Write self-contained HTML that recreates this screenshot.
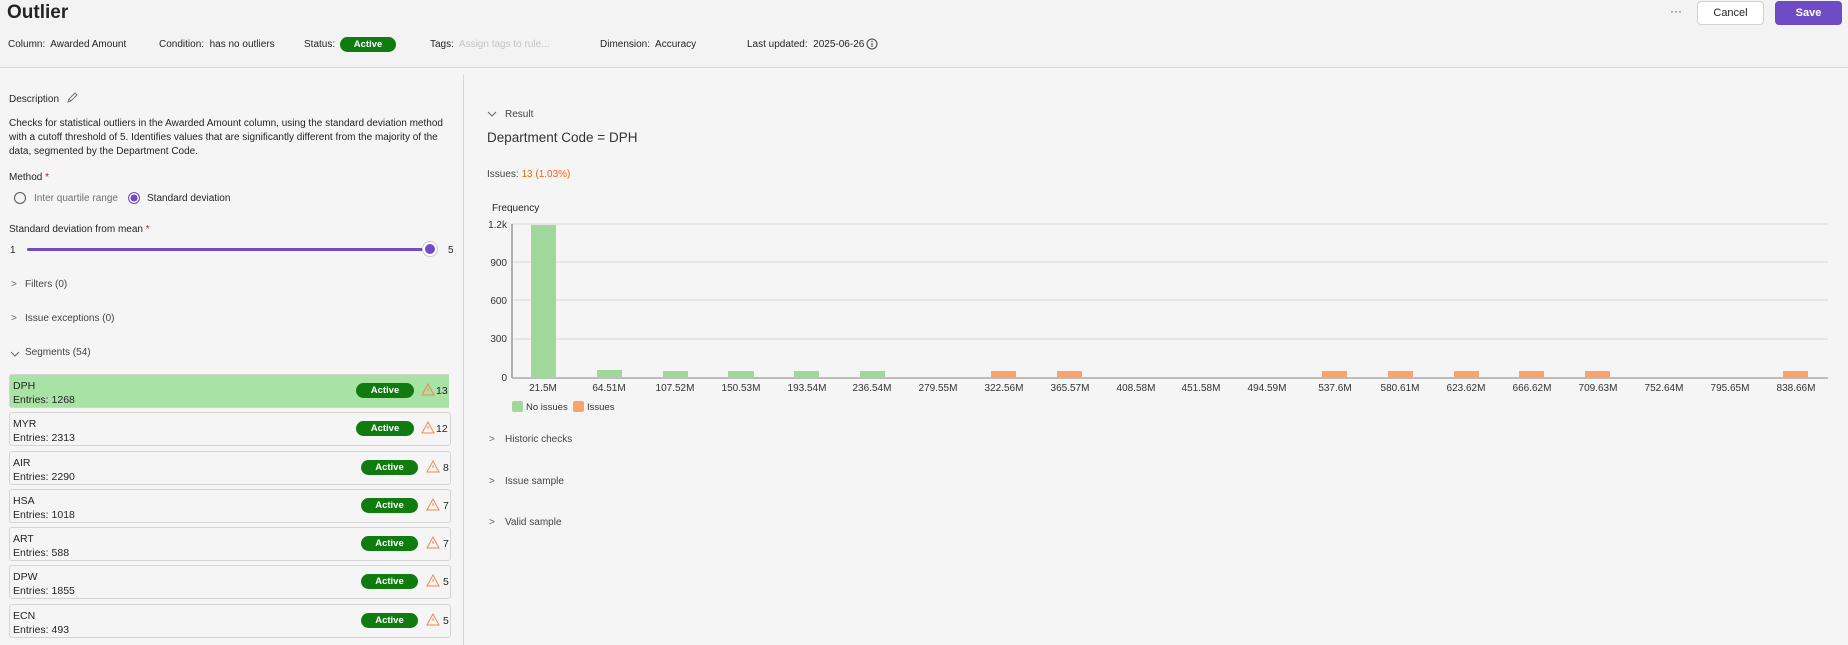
<!DOCTYPE html>
<html><head><meta charset="utf-8"><style>
*{box-sizing:border-box;margin:0;padding:0}
body{width:1848px;height:645px;overflow:hidden;background:#f5f5f5;font-family:"Liberation Sans",sans-serif;color:#242424;font-size:11px;position:relative}
.a{position:absolute;white-space:nowrap}
.pill{position:absolute;background:#107c10;color:#fff;font-weight:bold;font-size:9.5px;border-radius:8px;text-align:center;height:15px;line-height:15px}
.card{position:absolute;left:9px;width:442px;height:34px;border:1px solid #d4d4d4;border-radius:3px;background:#f5f5f5}
.card .n{position:absolute;left:3px;top:5px;font-size:10.5px}
.card .e{position:absolute;left:3px;top:19px;font-size:10.5px}
.sm{font-size:10px}
</style></head><body>
<div class="a" style="left:0;top:0;width:1848px;height:68px;background:#f3f3f3;border-bottom:1px solid #d6d6d6"></div>
<div class="a" style="left:7px;top:2px;font-size:19px;font-weight:bold;color:#242424">Outlier</div>
<div class="a sm" style="left:8px;top:39px">Column:&nbsp; Awarded Amount</div>
<div class="a sm" style="left:159px;top:39px">Condition:&nbsp; has no outliers</div>
<div class="a sm" style="left:304px;top:39px">Status:</div>
<div class="pill" style="left:340px;top:37px;width:56px">Active</div>
<div class="a sm" style="left:430px;top:39px">Tags:&nbsp; <span style="color:#c4c4c4">Assign tags to rule...</span></div>
<div class="a sm" style="left:600px;top:39px">Dimension:&nbsp; Accuracy</div>
<div class="a sm" style="left:747px;top:39px">Last updated:&nbsp; 2025-06-26</div>
<svg class="a" style="left:866px;top:38px" width="12" height="12"><circle cx="6" cy="6" r="5" fill="none" stroke="#444"/><line x1="6" y1="5" x2="6" y2="9" stroke="#444"/><circle cx="6" cy="3.5" r=".7" fill="#444"/></svg>
<div class="a" style="left:1670px;top:4px;font-size:12px;color:#444">···</div>
<div class="a" style="left:1697px;top:1px;width:67px;height:24px;border:1px solid #d1d1d1;border-radius:4px;background:#fff;text-align:center;line-height:22px;font-size:11px">Cancel</div>
<div class="a" style="left:1775px;top:1px;width:67px;height:24px;border-radius:4px;background:#6f4cc6;color:#fff;text-align:center;line-height:24px;font-size:11px;font-weight:bold">Save</div>
<div class="a" style="left:463px;top:75px;width:1px;height:570px;background:#d6d6d6"></div>

<div class="a sm" style="left:9px;top:94px">Description</div>
<svg class="a" style="left:66px;top:92px" width="12" height="12"><path d="M2 10 L3 7 L9 1 L11 3 L5 9 Z M3 7 L5 9" fill="none" stroke="#777"/></svg>
<div class="a sm" style="left:9px;top:117px;line-height:14px;white-space:normal;width:452px">Checks for statistical outliers in the Awarded Amount column, using the standard deviation method with a cutoff threshold of 5. Identifies values that are significantly different from the majority of the data, segmented by the Department Code.</div>
<div class="a sm" style="left:9px;top:172px">Method <span style="color:#c50f1f">*</span></div>
<svg class="a" style="left:13px;top:191px" width="14" height="14"><circle cx="7" cy="7" r="5.5" fill="none" stroke="#555"/></svg>
<div class="a sm" style="left:34px;top:193px;color:#707070">Inter quartile range</div>
<svg class="a" style="left:127px;top:191px" width="14" height="14"><circle cx="7" cy="7" r="5.5" fill="none" stroke="#6f4cc6"/><circle cx="7" cy="7" r="3.5" fill="#6f4cc6"/></svg>
<div class="a sm" style="left:147px;top:193px">Standard deviation</div>
<div class="a sm" style="left:9px;top:224px">Standard deviation from mean <span style="color:#c50f1f">*</span></div>
<div class="a sm" style="left:10px;top:245px">1</div>
<div class="a" style="left:27px;top:248px;width:404px;height:3px;background:#6f4cc6;border-radius:2px"></div>
<div class="a" style="left:423px;top:242px;width:14px;height:14px;border-radius:7px;background:#6f4cc6;border:2px solid #fff;box-shadow:0 0 0 1px #ccc"></div>
<div class="a sm" style="left:448px;top:245px">5</div>

<div class="a sm" style="left:11px;top:279px;color:#666">&gt;</div><div class="a sm" style="left:25px;top:279px;color:#444">Filters (0)</div>
<div class="a sm" style="left:11px;top:313px;color:#666">&gt;</div><div class="a sm" style="left:25px;top:313px;color:#444">Issue exceptions (0)</div>
<svg class="a" style="left:10px;top:350px" width="10" height="8"><path d="M1 2 L5 6 L9 2" fill="none" stroke="#666"/></svg><div class="a sm" style="left:25px;top:347px;color:#444">Segments (54)</div>

<div class="card" style="top:374px;background:#a8e2a5"><div class="n">DPH</div><div class="e">Entries: 1268</div></div>
<div class="pill" style="left:356px;top:383px;width:58px">Active</div>
<div class="card" style="top:412px"><div class="n">MYR</div><div class="e">Entries: 2313</div></div>
<div class="pill" style="left:356px;top:421px;width:58px">Active</div>
<div class="card" style="top:451px"><div class="n">AIR</div><div class="e">Entries: 2290</div></div>
<div class="pill" style="left:361px;top:460px;width:57px">Active</div>
<div class="card" style="top:489px"><div class="n">HSA</div><div class="e">Entries: 1018</div></div>
<div class="pill" style="left:361px;top:498px;width:57px">Active</div>
<div class="card" style="top:527px"><div class="n">ART</div><div class="e">Entries: 588</div></div>
<div class="pill" style="left:361px;top:536px;width:57px">Active</div>
<div class="card" style="top:565px"><div class="n">DPW</div><div class="e">Entries: 1855</div></div>
<div class="pill" style="left:361px;top:574px;width:57px">Active</div>
<div class="card" style="top:604px"><div class="n">ECN</div><div class="e">Entries: 493</div></div>
<div class="pill" style="left:361px;top:613px;width:57px">Active</div>
<svg class="a" style="left:0;top:0" width="470" height="645">
<g fill="none" stroke="#f0894a" stroke-width="1">
<path d="M422 395 L428 384 L434 395 Z M428 388 V391"/>
<path d="M422 433 L428 422 L434 433 Z M428 426 V429"/>
<path d="M427 472 L433 461 L439 472 Z M433 465 V468"/>
<path d="M427 510 L433 499 L439 510 Z M433 503 V506"/>
<path d="M427 548 L433 537 L439 548 Z M433 541 V544"/>
<path d="M427 586 L433 575 L439 586 Z M433 579 V582"/>
<path d="M427 625 L433 614 L439 625 Z M433 618 V621"/>
</g>
<g font-family="Liberation Sans" font-size="10.5" fill="#242424">
<text x="436" y="394">13</text><text x="436" y="432">12</text><text x="443" y="471">8</text><text x="443" y="509">7</text><text x="443" y="547">7</text><text x="443" y="585">5</text><text x="443" y="624">5</text>
</g>
<rect x="449" y="375" width="2" height="33" fill="#fff"/>
</svg>

<svg class="a" style="left:487px;top:110px" width="10" height="8"><path d="M1 2 L5 6 L9 2" fill="none" stroke="#666"/></svg>
<div class="a sm" style="left:505px;top:109px;color:#444">Result</div>
<div class="a" style="left:487px;top:130px;font-size:13.5px;color:#333">Department Code = DPH</div>
<div class="a" style="left:487px;top:169px;font-size:10px;color:#444">Issues: <span style="color:#f7630c">13 (1.03%)</span></div>
<div class="a" style="left:492px;top:203px;font-size:10px">Frequency</div>
<svg class="a" style="left:0;top:0" width="1848" height="645" font-family="Liberation Sans" font-size="10" fill="#333">
<g stroke="#e2e2e2" stroke-width="1.5">
<line x1="512" y1="224" x2="1828" y2="224"/><line x1="512" y1="262" x2="1828" y2="262"/><line x1="512" y1="300" x2="1828" y2="300"/><line x1="512" y1="339" x2="1828" y2="339"/>
</g>
<line x1="512" y1="224" x2="512" y2="378" stroke="#999" stroke-width="1.5"/>
<line x1="512" y1="378" x2="1828" y2="378" stroke="#aaa" stroke-width="1.5"/>
<g text-anchor="end"><text x="507" y="228">1.2k</text><text x="507" y="266">900</text><text x="507" y="304">600</text><text x="507" y="342">300</text><text x="507" y="381">0</text></g>
<g fill="#a0d89c">
<rect x="531" y="225" width="25" height="153"/>
<rect x="597" y="370" width="25" height="8"/>
<rect x="663" y="371" width="25" height="7"/>
<rect x="728" y="371" width="26" height="7"/>
<rect x="794" y="371" width="25" height="7"/>
<rect x="860" y="371" width="25" height="7"/>
</g>
<g fill="#f9a46b">
<rect x="991" y="371" width="25" height="7"/>
<rect x="1057" y="371" width="25" height="7"/>
<rect x="1322" y="371" width="25" height="7"/>
<rect x="1388" y="371" width="25" height="7"/>
<rect x="1454" y="371" width="25" height="7"/>
<rect x="1519" y="371" width="25" height="7"/>
<rect x="1585" y="371" width="25" height="7"/>
<rect x="1783" y="371" width="25" height="7"/>
</g>
<g text-anchor="middle">
<text x="543" y="391">21.5M</text><text x="609" y="391">64.51M</text><text x="675" y="391">107.52M</text><text x="741" y="391">150.53M</text><text x="807" y="391">193.54M</text><text x="872" y="391">236.54M</text><text x="938" y="391">279.55M</text><text x="1004" y="391">322.56M</text><text x="1070" y="391">365.57M</text><text x="1136" y="391">408.58M</text><text x="1201" y="391">451.58M</text><text x="1267" y="391">494.59M</text><text x="1335" y="391">537.6M</text><text x="1400" y="391">580.61M</text><text x="1466" y="391">623.62M</text><text x="1532" y="391">666.62M</text><text x="1598" y="391">709.63M</text><text x="1664" y="391">752.64M</text><text x="1730" y="391">795.65M</text><text x="1796" y="391">838.66M</text>
</g>
<rect x="512" y="401" width="11" height="11" rx="2" fill="#a0d89c"/><text x="526" y="410" font-size="9.5">No issues</text>
<rect x="573" y="401" width="11" height="11" rx="2" fill="#f9a46b"/><text x="587" y="410" font-size="9.5">Issues</text>
</svg>
<div class="a sm" style="left:489px;top:434px;color:#666">&gt;</div><div class="a sm" style="left:505px;top:434px;color:#444">Historic checks</div>
<div class="a sm" style="left:489px;top:476px;color:#666">&gt;</div><div class="a sm" style="left:505px;top:476px;color:#444">Issue sample</div>
<div class="a sm" style="left:489px;top:517px;color:#666">&gt;</div><div class="a sm" style="left:505px;top:517px;color:#444">Valid sample</div>
</body></html>
